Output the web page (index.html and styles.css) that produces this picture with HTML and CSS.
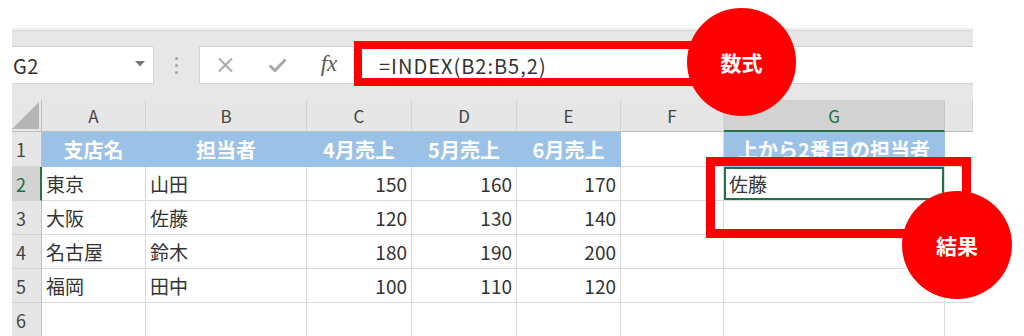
FILE: index.html
```html
<!DOCTYPE html>
<html lang="ja">
<head>
<meta charset="utf-8">
<title>INDEX</title>
<link rel="stylesheet" href="styles.css">
</head>
<body>
<div class="app">
  <div class="strip"></div>
  <div class="fbar">
    <div class="namebox">
      <span class="ref">G2</span>
      <svg class="caret" width="10" height="6" viewBox="0 0 10 6"><path d="M0 0H10L5 5.5Z" fill="#767676"/></svg>
    </div>
    <div class="grip"><i></i><i></i><i></i></div>
    <div class="formula">
      <div class="fslot"><svg width="15" height="14" viewBox="0 0 15 14"><path d="M1 0.5L14 13.5M14 0.5L1 13.5" stroke="#a8a8a8" stroke-width="2" fill="none"/></svg></div>
      <div class="fslot"><svg width="19" height="14" viewBox="0 0 19 14"><path d="M1.5 7.5L7 12.5L17.5 1.5" stroke="#a8a8a8" stroke-width="3" fill="none"/></svg></div>
      <div class="fslot"><span class="fx">fx</span></div>
      <div class="ftext">=INDEX(B2:B5,2)</div>
    </div>
  </div>
  <div class="gap"></div>
  <div class="sheet">
    <div class="ch corner"><svg width="29" height="31" viewBox="0 0 29 31"><path d="M27 2V29H0Z" fill="#b5b5b5"/></svg></div>
    <div class="ch">A</div><div class="ch">B</div><div class="ch">C</div><div class="ch">D</div><div class="ch">E</div><div class="ch">F</div><div class="ch sel">G</div><div class="ch"></div>

    <div class="rh">1</div>
    <div class="c hd">支店名</div><div class="c hd">担当者</div><div class="c hd">4月売上</div><div class="c hd">5月売上</div><div class="c hd">6月売上</div><div class="c"></div><div class="c hd">上から2番目の担当者</div><div class="c last"></div>

    <div class="rh sel">2</div>
    <div class="c">東京</div><div class="c">山田</div><div class="c n">150</div><div class="c n">160</div><div class="c n">170</div><div class="c"></div><div class="c active">佐藤</div><div class="c last"></div>

    <div class="rh">3</div>
    <div class="c">大阪</div><div class="c">佐藤</div><div class="c n">120</div><div class="c n">130</div><div class="c n">140</div><div class="c"></div><div class="c"></div><div class="c last"></div>

    <div class="rh">4</div>
    <div class="c">名古屋</div><div class="c">鈴木</div><div class="c n">180</div><div class="c n">190</div><div class="c n">200</div><div class="c"></div><div class="c"></div><div class="c last"></div>

    <div class="rh">5</div>
    <div class="c">福岡</div><div class="c">田中</div><div class="c n">100</div><div class="c n">110</div><div class="c n">120</div><div class="c"></div><div class="c"></div><div class="c last"></div>

    <div class="rh">6</div>
    <div class="c"></div><div class="c"></div><div class="c"></div><div class="c"></div><div class="c"></div><div class="c"></div><div class="c"></div><div class="c last"></div>
  </div>
</div>

<div class="mark mark-formula"></div>
<div class="badge badge-formula">数式</div>
<div class="mark mark-result"></div>
<div class="badge badge-result">結果</div>
</body>
</html>
```

FILE: styles.css
```css
* { box-sizing: border-box; }

html, body {
  margin: 0;
  padding: 0;
  background: #ffffff;
  overflow: hidden;
}

body {
  width: 1024px;
  height: 336px;
  font-family: "Noto Sans CJK JP", "Noto Sans", sans-serif;
  color: #333333;
}

.app {
  margin: 28px 0 0 12px;
  width: 961px;
  background: #e7e7e7;
}

.strip {
  height: 18px;
  background: linear-gradient(#efefef 0 2px, #d9d9d9 2px 3px, #e7e7e7 3px);
}

.fbar {
  height: 38px;
  display: flex;
}

.namebox {
  width: 142px;
  background: #ffffff;
  border: 1px solid #d3d3d3;
  border-left: none;
  display: flex;
  align-items: center;
  justify-content: space-between;
  padding: 0 8px 0 1px;
}

.ref {
  font-size: 20px;
  color: #333333;
  letter-spacing: 0.5px;
}

.caret { margin-top: -3px; }

.grip {
  width: 45px;
  display: flex;
  flex-direction: column;
  align-items: center;
  justify-content: center;
  gap: 4px;
}

.grip i {
  display: block;
  width: 3px;
  height: 3px;
  border-radius: 50%;
  background: #a3a3a3;
}

.formula {
  flex: 1;
  background: #ffffff;
  border: 1px solid #d3d3d3;
  border-right: none;
  display: flex;
  align-items: center;
}

.fslot {
  width: 52px;
  height: 100%;
  display: flex;
  align-items: center;
  justify-content: center;
}

.fslot:first-child { width: 51px; }

.fx {
  font-family: "Liberation Serif", "DejaVu Serif", serif;
  font-style: italic;
  font-size: 23px;
  color: #575757;
  margin-top: -3px;
}

.ftext {
  padding-left: 24px;
  font-size: 20px;
  letter-spacing: 1px;
  color: #333333;
}

.gap { height: 16px; }

.sheet {
  display: grid;
  grid-template-columns: 30px 104px 161px 105px 105px 104px 103px 221px 28px;
  grid-template-rows: 32px 35px repeat(5, 34px);
  background: #ffffff;
}

.ch {
  background: #e6e6e6;
  border-right: 1px solid #d3d3d3;
  border-bottom: 1px solid #bfbfbf;
  font-size: 17px;
  color: #444444;
  display: flex;
  align-items: center;
  justify-content: center;
}

.ch:last-child { border-right: none; background: #ececec; }

.ch.corner {
  align-items: flex-start;
  justify-content: flex-start;
  border-right-color: #bfbfbf;
}

.ch.sel {
  background: #d2d2d2;
  color: #217346;
  border-bottom: 2px solid #217346;
  border-right-color: #c6c6c6;
}

.rh {
  background: #e6e6e6;
  border-right: 1px solid #bfbfbf;
  border-bottom: 1px solid #d3d3d3;
  font-size: 18px;
  color: #444444;
  display: flex;
  align-items: center;
  padding-left: 4px;
}

.rh.sel {
  background: #d2d2d2;
  color: #217346;
  border-right: 2px solid #217346;
}

.c {
  border-right: 1px solid #dadada;
  border-bottom: 1px solid #dadada;
  font-size: 19px;
  color: #333333;
  display: flex;
  align-items: center;
  padding: 0 4px;
  white-space: nowrap;
}

.c.last { border-right: none; }

.c.n {
  justify-content: flex-end;
}

.c.hd {
  background: #9bc2e6;
  border-color: #9bc2e6;
  color: #ffffff;
  font-weight: bold;
  font-size: 20px;
  justify-content: center;
  padding: 0;
}

.c.active {
  box-shadow: inset 0 0 0 2px #217346;
  padding-left: 5px;
}

.mark {
  position: absolute;
  border-style: solid;
  border-color: #ff0000;
}

.mark-formula {
  left: 354px;
  top: 41px;
  width: 350px;
  height: 45px;
  border-width: 8px;
}

.mark-result {
  left: 706px;
  top: 157px;
  width: 265px;
  height: 81px;
  border-width: 9px;
}

.badge {
  position: absolute;
  border-radius: 50%;
  background: #ff0000;
  color: #ffffff;
  font-weight: bold;
  font-size: 21px;
  display: flex;
  align-items: center;
  justify-content: center;
}

.badge-formula {
  left: 687px;
  top: 8px;
  width: 109px;
  height: 108px;
}

.badge-result {
  left: 902px;
  top: 191px;
  width: 110px;
  height: 108px;
}
```
